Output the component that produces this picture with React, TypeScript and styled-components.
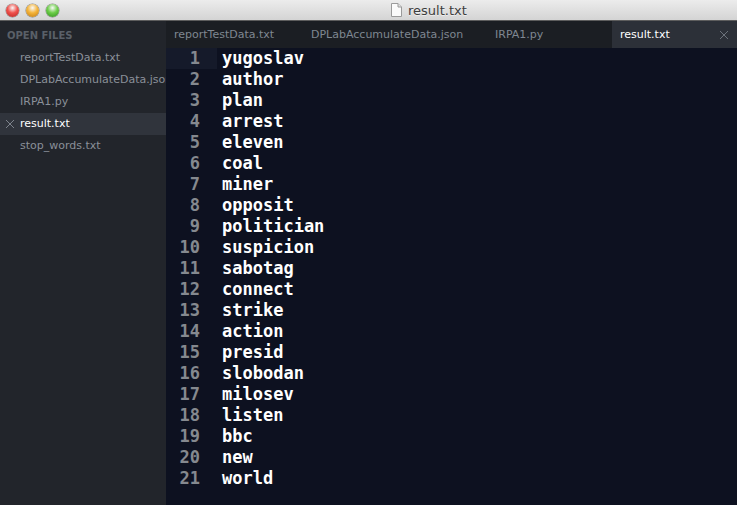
import * as React from 'react';
import styled, { createGlobalStyle } from 'styled-components';

const GlobalStyle = createGlobalStyle`
  html, body {
    margin: 0;
    padding: 0;
    background: #0d1120;
  }
  * {
    box-sizing: border-box;
  }
`;

const Window = styled.div`
  width: 737px;
  height: 505px;
  display: flex;
  flex-direction: column;
  overflow: hidden;
  font-family: 'DejaVu Sans', 'Liberation Sans', sans-serif;
`;

const TitleBar = styled.div`
  position: relative;
  height: 21px;
  flex: none;
  display: flex;
  align-items: center;
  background: linear-gradient(#ececec, #d4d4d4);
  border-bottom: 1px solid #5d5d5d;
`;

const Lights = styled.div`
  display: flex;
  gap: 7px;
  padding-left: 6px;
`;

const Light = styled.span<{ $color: string; $edge: string }>`
  width: 13px;
  height: 13px;
  border-radius: 50%;
  background: radial-gradient(circle at 50% 30%, #ffffffcc 0, ${p => p.$color} 45%, ${p => p.$edge} 100%);
  box-shadow: 0 0 0 0.5px #00000066;
`;

const Title = styled.div`
  position: absolute;
  left: 391px;
  top: 0;
  height: 20px;
  display: flex;
  align-items: center;
  gap: 6px;
  font-size: 13px;
  color: #3d3d3d;
  text-shadow: 0 1px 0 #ffffff88;
`;

const Body = styled.div`
  flex: 1;
  display: flex;
  min-height: 0;
`;

const Sidebar = styled.div`
  width: 166px;
  flex: none;
  background: #22252b;
  padding-top: 4px;
  overflow: hidden;
`;

const SideHeader = styled.div`
  height: 22px;
  line-height: 22px;
  padding-left: 7px;
  font-size: 10px;
  font-weight: bold;
  color: #5a6068;
  white-space: nowrap;
`;

const FileRow = styled.div<{ $active?: boolean }>`
  position: relative;
  height: 22px;
  line-height: 22px;
  padding-left: 20px;
  font-size: 11px;
  white-space: nowrap;
  color: ${p => (p.$active ? '#ffffff' : '#8a9099')};
  background: ${p => (p.$active ? '#30343c' : 'transparent')};
`;

const RowClose = styled.span`
  position: absolute;
  left: 5px;
  top: 6px;
  display: flex;
`;

const Main = styled.div`
  flex: 1;
  display: flex;
  flex-direction: column;
  min-width: 0;
`;

const TabBar = styled.div`
  height: 27px;
  flex: none;
  display: flex;
  background: #1b1e23;
`;

const Tab = styled.div<{ $width: number; $active?: boolean }>`
  width: ${p => p.$width}px;
  flex: none;
  display: flex;
  align-items: center;
  justify-content: space-between;
  padding: 0 8px;
  font-size: 11px;
  white-space: nowrap;
  color: ${p => (p.$active ? '#ffffff' : '#7f8791')};
  background: ${p => (p.$active ? '#2c3038' : 'transparent')};
`;

const Editor = styled.div`
  flex: 1;
  display: flex;
  background: #0d1120;
  font-family: 'DejaVu Sans Mono', 'Liberation Mono', monospace;
  font-size: 17px;
  font-weight: bold;
  line-height: 21px;
`;

const Gutter = styled.div`
  width: 51px;
  flex: none;
`;

const LineNo = styled.div<{ $current?: boolean }>`
  height: 21px;
  padding-right: 17px;
  text-align: right;
  color: #85898f;
  background: ${p => (p.$current ? '#151a2a' : 'transparent')};
`;

const Code = styled.div`
  flex: 1;
  padding-left: 5px;
  color: #ffffff;
`;

const CodeLine = styled.div`
  height: 21px;
  white-space: pre;
`;

const CloseIcon = ({ color }: { color: string }) => (
  <svg width="10" height="10" viewBox="0 0 10 10">
    <path d="M1 1 L9 9 M9 1 L1 9" stroke={color} strokeWidth="1" fill="none" />
  </svg>
);

const DocIcon = () => (
  <svg width="11" height="14" viewBox="0 0 11 14">
    <path d="M0.5 0.5 H7 L10.5 4 V13.5 H0.5 Z" fill="#fafafa" stroke="#9a9a9a" />
    <path d="M7 0.5 V4 H10.5" fill="#e0e0e0" stroke="#9a9a9a" />
  </svg>
);

const openFiles = ['reportTestData.txt', 'DPLabAccumulateData.json', 'IRPA1.py', 'result.txt', 'stop_words.txt'];

const tabs = [
  { name: 'reportTestData.txt', width: 137 },
  { name: 'DPLabAccumulateData.json', width: 184 },
  { name: 'IRPA1.py', width: 125 },
  { name: 'result.txt', width: 125, active: true },
];

const words = [
  'yugoslav', 'author', 'plan', 'arrest', 'eleven', 'coal', 'miner', 'opposit', 'politician',
  'suspicion', 'sabotag', 'connect', 'strike', 'action', 'presid', 'slobodan', 'milosev',
  'listen', 'bbc', 'new', 'world',
];

export default function App() {
  return (
    <Window>
      <GlobalStyle />
      <TitleBar>
        <Lights>
          <Light $color="#f0524c" $edge="#b52520" />
          <Light $color="#f4b43a" $edge="#c07a10" />
          <Light $color="#6ccd48" $edge="#2f8e1e" />
        </Lights>
        <Title>
          <DocIcon />
          result.txt
        </Title>
      </TitleBar>
      <Body>
        <Sidebar>
          <SideHeader>OPEN FILES</SideHeader>
          {openFiles.map(f => (
            <FileRow key={f} $active={f === 'result.txt'}>
              {f === 'result.txt' && (
                <RowClose>
                  <CloseIcon color="#7d838c" />
                </RowClose>
              )}
              {f}
            </FileRow>
          ))}
        </Sidebar>
        <Main>
          <TabBar>
            {tabs.map(t => (
              <Tab key={t.name} $width={t.width} $active={t.active}>
                <span>{t.name}</span>
                {t.active && <CloseIcon color="#6c727b" />}
              </Tab>
            ))}
          </TabBar>
          <Editor>
            <Gutter>
              {words.map((_, i) => (
                <LineNo key={i} $current={i === 0}>
                  {i + 1}
                </LineNo>
              ))}
            </Gutter>
            <Code>
              {words.map((w, i) => (
                <CodeLine key={i}>{w}</CodeLine>
              ))}
            </Code>
          </Editor>
        </Main>
      </Body>
    </Window>
  );
}
